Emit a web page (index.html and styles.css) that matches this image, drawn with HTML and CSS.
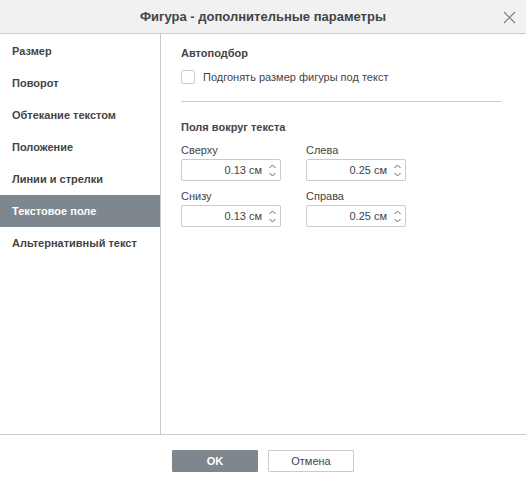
FILE: index.html
```html
<!DOCTYPE html>
<html lang="ru">
<head>
  <meta charset="UTF-8" />
  <title>Фигура - дополнительные параметры</title>
  <link rel="stylesheet" href="styles.css">
</head>
<body>
  <div class="dialog">
    <!-- Header -->
    <div class="header">
      <div class="title">Фигура - дополнительные параметры</div>
      <div class="close">
        <svg width="13" height="13" viewBox="0 0 13 13"><path d="M1 1L12 12M12 1L1 12" stroke="#7a7a7a" stroke-width="1.1" fill="none"/></svg>
      </div>
    </div>

    <div class="body">
      <!-- Side menu -->
      <div class="menu">
        <div class="menu-item">Размер</div>
        <div class="menu-item">Поворот</div>
        <div class="menu-item">Обтекание текстом</div>
        <div class="menu-item">Положение</div>
        <div class="menu-item">Линии и стрелки</div>
        <div class="menu-item active">Текстовое поле</div>
        <div class="menu-item">Альтернативный текст</div>
      </div>

      <!-- Content -->
      <div class="content">
        <div class="section-title">Автоподбор</div>
        <label class="check-row">
          <span class="checkbox"></span>
          <span>Подгонять размер фигуры под текст</span>
        </label>
        <div class="separator"></div>

        <div class="section-title second">Поля вокруг текста</div>
        <div class="fields">
          <div class="field">
            <div class="field-label">Сверху</div>
            <div class="spin">
              <span class="spin-value">0.13 см</span>
              <span class="spin-arrows">
                <svg width="7" height="5" viewBox="0 0 7 5"><path d="M0.5 4L3.5 1L6.5 4" stroke="#666" fill="none"/></svg>
                <svg width="7" height="5" viewBox="0 0 7 5"><path d="M0.5 1L3.5 4L6.5 1" stroke="#666" fill="none"/></svg>
              </span>
            </div>
          </div>
          <div class="field">
            <div class="field-label">Слева</div>
            <div class="spin">
              <span class="spin-value">0.25 см</span>
              <span class="spin-arrows">
                <svg width="7" height="5" viewBox="0 0 7 5"><path d="M0.5 4L3.5 1L6.5 4" stroke="#666" fill="none"/></svg>
                <svg width="7" height="5" viewBox="0 0 7 5"><path d="M0.5 1L3.5 4L6.5 1" stroke="#666" fill="none"/></svg>
              </span>
            </div>
          </div>
          <div class="field">
            <div class="field-label">Снизу</div>
            <div class="spin">
              <span class="spin-value">0.13 см</span>
              <span class="spin-arrows">
                <svg width="7" height="5" viewBox="0 0 7 5"><path d="M0.5 4L3.5 1L6.5 4" stroke="#666" fill="none"/></svg>
                <svg width="7" height="5" viewBox="0 0 7 5"><path d="M0.5 1L3.5 4L6.5 1" stroke="#666" fill="none"/></svg>
              </span>
            </div>
          </div>
          <div class="field">
            <div class="field-label">Справа</div>
            <div class="spin">
              <span class="spin-value">0.25 см</span>
              <span class="spin-arrows">
                <svg width="7" height="5" viewBox="0 0 7 5"><path d="M0.5 4L3.5 1L6.5 4" stroke="#666" fill="none"/></svg>
                <svg width="7" height="5" viewBox="0 0 7 5"><path d="M0.5 1L3.5 4L6.5 1" stroke="#666" fill="none"/></svg>
              </span>
            </div>
          </div>
        </div>
      </div>
    </div>

    <!-- Footer -->
    <div class="footer">
      <button class="btn primary">OK</button>
      <button class="btn">Отмена</button>
    </div>
  </div>
</body>
</html>
```

FILE: styles.css
```css
* {
  box-sizing: border-box;
  margin: 0;
  padding: 0;
}

html, body {
  height: 100%;
  font-family: "Liberation Sans", Arial, sans-serif;
  font-size: 11px;
  color: #444;
  background: #fff;
  overflow: hidden;
}

.dialog {
  display: flex;
  flex-direction: column;
  height: 100vh;
  width: 100%;
}

.header {
  height: 34px;
  flex-shrink: 0;
  background: #f1f1f1;
  border-bottom: 1px solid #cbcbcb;
  display: flex;
  align-items: center;
  justify-content: center;
  position: relative;
}

.title {
  font-size: 13px;
  font-weight: bold;
  color: #444;
}

.close {
  position: absolute;
  right: 10px;
  top: 11px;
  width: 13px;
  height: 13px;
  display: flex;
}

.body {
  flex: 1;
  display: flex;
  min-height: 0;
}

.menu {
  width: 161px;
  flex-shrink: 0;
  border-right: 1px solid #cbcbcb;
  padding-top: 1px;
}

.menu-item {
  height: 32px;
  line-height: 32px;
  padding-left: 12px;
  font-weight: bold;
  color: #444;
}

.menu-item.active {
  background: #7e868e;
  color: #fff;
}

.content {
  flex: 1;
  padding: 12px 25px 0 20px;
}

.section-title {
  font-weight: bold;
  height: 14px;
  line-height: 14px;
}

.section-title.second {
  margin-top: 18px;
}

.check-row {
  display: flex;
  align-items: center;
  margin-top: 10px;
  height: 14px;
}

.checkbox {
  width: 14px;
  height: 14px;
  border: 1px solid #cbcbcb;
  border-radius: 2px;
  margin-right: 8px;
  background: #fff;
}

.separator {
  height: 1px;
  background: #cbcbcb;
  margin-top: 17px;
}

.fields {
  display: grid;
  grid-template-columns: 100px 100px;
  column-gap: 25px;
  row-gap: 8px;
  margin-top: 9px;
}

.field-label {
  height: 14px;
  line-height: 14px;
  margin-bottom: 2px;
}

.spin {
  height: 22px;
  border: 1px solid #cbcbcb;
  border-radius: 2px;
  display: flex;
  align-items: center;
  justify-content: flex-end;
  padding-right: 4px;
}

.spin-value {
  margin-right: 7px;
}

.spin-arrows {
  display: flex;
  flex-direction: column;
  gap: 3px;
}

.spin-arrows svg {
  display: block;
}

.footer {
  height: 47px;
  flex-shrink: 0;
  border-top: 1px solid #cbcbcb;
  display: flex;
  justify-content: center;
  align-items: flex-start;
  padding-top: 15px;
  gap: 10px;
}

.btn {
  width: 86px;
  height: 22px;
  font-family: "Liberation Sans", Arial, sans-serif;
  font-size: 11px;
  color: #444;
  background: #fff;
  border: 1px solid #cbcbcb;
  border-radius: 1px;
  cursor: pointer;
}

.btn.primary {
  background: #7e868e;
  border-color: #7e868e;
  color: #fff;
  font-weight: bold;
}
```
